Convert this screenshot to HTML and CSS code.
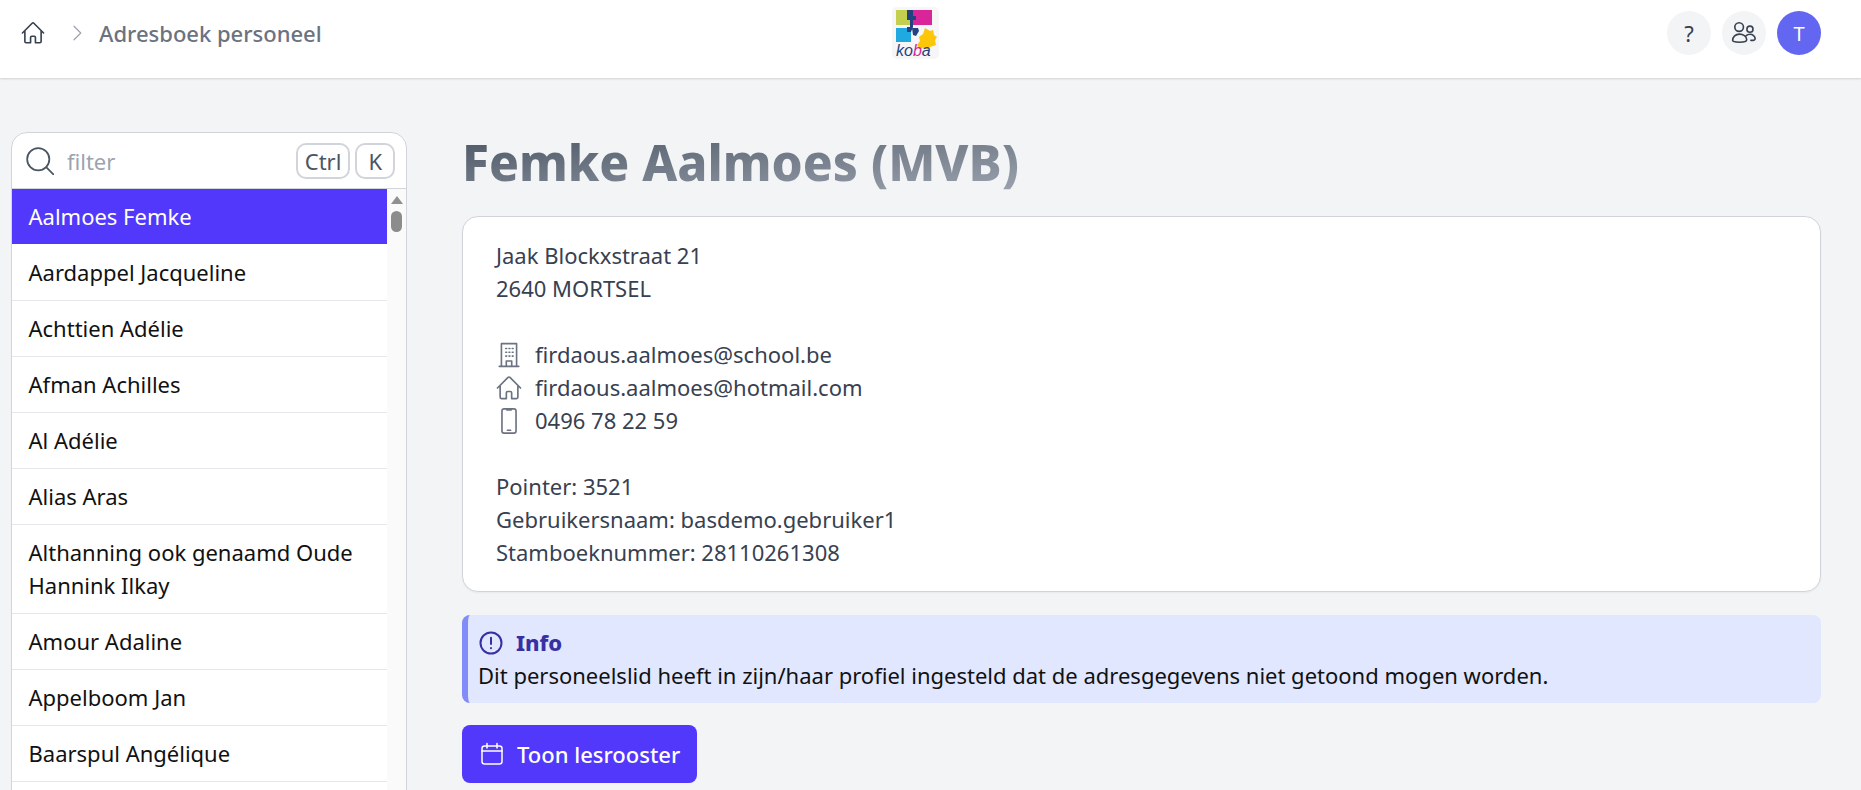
FILE: index.html
```html
<!DOCTYPE html>
<html lang="nl">
<head>
<meta charset="utf-8">
<title>Adresboek personeel</title>
<link rel="stylesheet" href="styles.css">
</head>
<body>
<header class="topbar">
  <nav class="crumbs">
    <svg class="home-icon" viewBox="0 0 24 24" fill="none" stroke="currentColor" stroke-width="1.5" stroke-linecap="round" stroke-linejoin="round"><path d="M2.25 12l8.95-8.96a1.13 1.13 0 0 1 1.6 0L21.75 12M4.5 9.75v10.13c0 .62.5 1.12 1.13 1.12H9.75v-4.88c0-.62.5-1.12 1.13-1.12h2.25c.62 0 1.12.5 1.12 1.12V21h4.13c.62 0 1.12-.5 1.12-1.12V9.75"/></svg>
    <svg class="chev" viewBox="0 0 24 24" fill="none" stroke="currentColor" stroke-width="1.6" stroke-linecap="round" stroke-linejoin="round"><path d="M8 3l9 9-9 9"/></svg>
    <span class="crumb-text">Adresboek personeel</span>
  </nav>
  <div class="logo">
    <svg class="logo-art" viewBox="0 0 47 52">
      <rect x="4" y="3" width="15" height="15" fill="#c5cf4e"/>
      <rect x="20" y="3" width="20" height="15" fill="#d9259a"/>
      <rect x="4" y="21" width="15" height="14" fill="#20a9e0"/>
      <path d="M15 3h6v6h3v4h-3v7l-2 5h-4v-5h3v-7h-3z" fill="#24427f"/>
      <path d="M20 21h6l1 3-3 5-3-1z" fill="#24427f"/>
      <path d="M33 21l5 3 3-1 1 5 3 2-2 3 1 5-6 2-2 3-5-2-3 1-3-4 3-4-1-4 4-3z" fill="#fcc70b"/>
    </svg>
    <span class="logo-text">ko<b>b</b>a</span>
  </div>
  <div class="actions">
    <span class="round round-help">?</span>
    <span class="round"><svg class="users-icon" viewBox="0 0 24 24" fill="none" stroke="currentColor" stroke-width="1.5" stroke-linecap="round" stroke-linejoin="round"><circle cx="7.5" cy="6.5" r="4"/><circle cx="17.500" cy="8.500" r="2.800"/><path d="M1.500 19c0-3.600 2.800-6 6.300-6 3.400 0 6.700 2.200 6.700 5.200 0 1.300-2.800 2.300-6.700 2.300-3.800 0-6.300-.6-6.300-1.500z"/><path d="M14 14.500c1-.9 2.200-1.300 3.500-1.300 2.500 0 4.800 1.700 4.800 4 0 .9-1.800 1.600-4 1.600"/></svg></span>
    <span class="round avatar">T</span>
  </div>
</header>
<div class="page">
  <aside class="sidebar">
    <div class="search">
      <svg class="search-icon" viewBox="0 0 24 24" fill="none" stroke="currentColor" stroke-width="1.5" stroke-linecap="round"><circle cx="10.500" cy="10.500" r="9.500"/><path d="M17.500 17.500l6 6"/></svg>
      <span class="filter">filter</span>
      <kbd class="key">Ctrl</kbd>
      <kbd class="key key-k">K</kbd>
    </div>
    <div class="list-wrap">
      <ul class="list">
        <li class="row active">Aalmoes Femke</li>
        <li class="row">Aardappel Jacqueline</li>
        <li class="row">Achttien Adélie</li>
        <li class="row">Afman Achilles</li>
        <li class="row">Al Adélie</li>
        <li class="row">Alias Aras</li>
        <li class="row">Althanning ook genaamd Oude Hannink Ilkay</li>
        <li class="row">Amour Adaline</li>
        <li class="row">Appelboom Jan</li>
        <li class="row">Baarspul Angélique</li>
      </ul>
      <div class="scrollbar">
        <span class="arrow"></span>
        <span class="thumb"></span>
      </div>
    </div>
  </aside>
  <main class="content">
    <h1 class="title">Femke Aalmoes (MVB)</h1>
    <section class="card">
      <p class="line">Jaak Blockxstraat 21</p>
      <p class="line">2640 MORTSEL</p>
      <p class="line blank"></p>
      <p class="line icon-line"><svg class="ci" viewBox="0 0 24 24" fill="none" stroke="currentColor" stroke-width="1.5" stroke-linecap="round" stroke-linejoin="round"><path d="M3 22.500h18M5 22.500V1.500h14v21M9.500 22.500V17.500h5v5M9 6h.8M12 6h.8M15 6h.8M9 9.500h.8M12 9.500h.8M15 9.500h.8M9 13h.8M12 13h.8M15 13h.8"/></svg>firdaous.aalmoes@school.be</p>
      <p class="line icon-line"><svg class="ci" viewBox="1 1 22 22" fill="none" stroke="currentColor" stroke-width="1.4" stroke-linecap="round" stroke-linejoin="round"><path d="M2.250 12l8.950-8.960a1.130 1.130 0 0 1 1.600 0L21.750 12M4.500 9.750v10.130c0 .62.5 1.120 1.130 1.120H9.750v-4.880c0-.62.5-1.120 1.130-1.120h2.250c.62 0 1.120.5 1.120 1.120V21h4.130c.62 0 1.120-.5 1.120-1.120V9.750"/></svg>firdaous.aalmoes@hotmail.com</p>
      <p class="line icon-line"><svg class="ci" viewBox="0 0 24 24" fill="none" stroke="currentColor" stroke-width="1.5" stroke-linecap="round" stroke-linejoin="round"><rect x="5.500" y="0.800" width="13" height="22.400" rx="2"/><path d="M10 .8v1h4v-1M10.500 20.500h3"/></svg>0496 78 22 59</p>
      <p class="line blank"></p>
      <p class="line">Pointer: 3521</p>
      <p class="line">Gebruikersnaam: basdemo.gebruiker1</p>
      <p class="line">Stamboeknummer: 28110261308</p>
    </section>
    <section class="notice">
      <div class="notice-head">
        <svg class="notice-icon" viewBox="0 0 24 24" fill="none" stroke="currentColor" stroke-width="2" stroke-linecap="round"><circle cx="12" cy="12" r="10.500"/><path d="M12 6.800v6.200M12 17v.2"/></svg>
        <strong class="notice-title">Info</strong>
      </div>
      <p class="notice-text">Dit personeelslid heeft in zijn/haar profiel ingesteld dat de adresgegevens niet getoond mogen worden.</p>
    </section>
    <button class="btn" type="button">
      <svg class="btn-icon" viewBox="0 0 24 24" fill="none" stroke="currentColor" stroke-width="1.500" stroke-linecap="round" stroke-linejoin="round"><rect x="2" y="4" width="20" height="18" rx="2.500"/><path d="M7 1.500V6M17 1.500V6M2 9h20"/></svg>
      Toon lesrooster
    </button>
  </main>
</div>
</body>
</html>
```
FILE: styles.css
```css
* { box-sizing: border-box; }
html, body { margin: 0; height: 790px; overflow: hidden; }
body {
  background: #f3f4f6;
  font-family: "Noto Sans", sans-serif;
  font-size: 22px;
  color: #374151;
}
.topbar {
  height: 78px;
  background: #fff;
  box-shadow: 0 1px 2px rgba(0,0,0,.15);
  display: grid;
  grid-template-columns: 1fr auto 1fr;
  align-items: center;
  padding: 0 40px 12px 20px;
  position: relative;
}
.crumbs { display: flex; align-items: center; }
.home-icon { width: 26px; height: 26px; color: #374151; }
.chev { width: 18px; height: 18px; color: #9ca3af; margin-left: 22px; }
.crumb-text { margin-left: 13px; font-size: 22px; color: #6b7280; font-weight: 500; }
.logo {
  width: 47px; height: 52px; margin-right: 10px; background: #f6f6f6; border-radius: 5px;
  position: relative;
}
.logo-art { width: 47px; height: 52px; display: block; filter: blur(.5px); }
.logo-text {
  position: absolute; left: 4px; top: 37px;
  font-size: 16px; line-height: 14px; font-style: italic; color: #24427f;
  font-family: "Liberation Sans", sans-serif;
}
.logo-text b { color: #d9259a; font-weight: 400; }
.actions { display: flex; justify-content: flex-end; gap: 11px; }
.round {
  width: 44px; height: 44px; border-radius: 50%; background: #f3f4f6;
  display: flex; align-items: center; justify-content: center;
  font-size: 20px; color: #374151;
}
.round-help { font-size: 22px; }
.users-icon { width: 26px; height: 26px; }
.avatar { background: #6366f1; color: #fff; }
.page {
  display: flex;
  align-items: flex-start;
  padding: 54px 40px 0 11px;
  gap: 55px;
}
.sidebar {
  width: 396px;
  flex: none;
  height: 660px;
  background: #fff;
  border: 1px solid #d1d5db;
  border-radius: 16px 16px 0 0;
  overflow: hidden;
}
.search {
  height: 56px;
  display: flex;
  align-items: center;
  padding: 0 11px 0 14px;
  border-bottom: 1px solid #d1d5db;
}
.search-icon { width: 28px; height: 28px; color: #4b5563; flex: none; }
.filter { margin-left: 13px; flex: 1; font-size: 22px; color: #9ca3af; }
.key {
  font-family: "Noto Sans", sans-serif;
  font-size: 22px;
  height: 36px;
  line-height: 33px;
  border: 2px solid #d1d5db;
  border-radius: 10px;
  padding: 0 7px;
  color: #4b5563;
}
.key-k { margin-left: 5px; padding: 0 11px; }
.list-wrap { display: flex; min-height: 603px; }
.list { list-style: none; margin: 0; padding: 0; flex: 1; min-width: 0; }
.row {
  padding: 11px 16.5px;
  font-size: 22px;
  line-height: 33px;
  color: #111;
  border-bottom: 1px solid #e5e7eb;
  background: #fff;
}
.row.active { background: #5138fb; color: #fff; border-bottom-color: #fff; }
.scrollbar {
  width: 19px; flex: none; background: #fafafa;
  display: flex; flex-direction: column; align-items: center; padding-top: 7px;
}
.arrow { width: 0; height: 0; border: 6px solid transparent; border-top: 0; border-bottom: 8px solid #909090; }
.thumb { width: 11px; height: 21px; background: #8c8c8c; border-radius: 6px; margin-top: 7px; }
.content { flex: 1; min-width: 0; }
.title {
  display: table;
  margin: 0;
  font-size: 49.5px;
  line-height: 60px;
  font-weight: 800;
  background-image: linear-gradient(to bottom right, #4b5563, #9ca3af);
  -webkit-background-clip: text;
  background-clip: text;
  color: transparent;
}
.card {
  margin-top: 24px;
  background: #fff;
  border: 1px solid #d1d5db;
  border-radius: 16px;
  padding: 22px 33px;
  box-shadow: 0 1px 2px rgba(0,0,0,.05);
}
.line { margin: 0; font-size: 22px; line-height: 33px; height: 33px; color: #374151; }
.icon-line { display: flex; align-items: center; }
.ci { width: 26px; height: 26px; color: #6b7280; margin-right: 13px; flex: none; }
.notice {
  margin-top: 23px;
  height: 88px;
  background: #e0e7ff;
  border-left: 6px solid #818cf8;
  border-radius: 8px;
  padding: 11px 11px 0;
  color: #000;
}
.notice-head { display: flex; align-items: center; color: #3730a3; font-size: 22px; line-height: 33px; }
.notice-title { font-weight: 800; }
.notice-icon { width: 24px; height: 24px; margin-right: 13px; }
.notice-text { margin: 0 0 0 -1px; font-size: 22px; line-height: 33px; color: #111; }
.btn {
  margin-top: 22px;
  height: 58px;
  width: 235px;
  background: #5138fb;
  color: #fff;
  border: 0;
  border-radius: 8px;
  font-family: "Noto Sans", sans-serif;
  font-size: 22px;
  font-weight: 500;
  display: flex;
  align-items: center;
  padding: 0 0 0 18px;
  gap: 13px;
}
.btn-icon { width: 24px; height: 24px; flex: none; }
```
